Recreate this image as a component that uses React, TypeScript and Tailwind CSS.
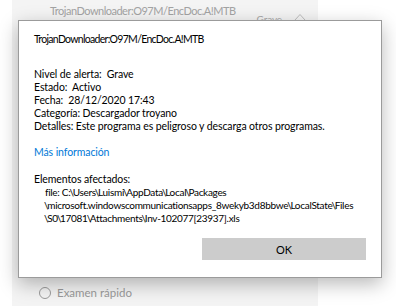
import React from "react";

function Path({ text }: { text: string }) {
  const parts = text.split("\\");
  return (
    <div>
      {parts.map((p, i) => (
        <React.Fragment key={i}>
          {i > 0 && <span className="inline-block mx-[-1px]">\</span>}
          {p}
        </React.Fragment>
      ))}
    </div>
  );
}

export default function App() {
  const font = { fontFamily: 'Lato, "Noto Sans", sans-serif' };
  return (
    <div
      className="relative w-[396px] h-[306px] overflow-hidden bg-white text-[10.5px] leading-[13px] tracking-[-0.1px] text-black"
      style={font}
    >
      {/* background page */}
      <div className="ml-[12px] w-[306px] h-full bg-[#f4f4f4] flex flex-col">
        <div className="flex items-start pl-[38px] pr-[12px] pt-[4px]">
          <span className="text-[#a3a3a3] text-[11px] leading-[14px] tracking-[-0.5px] whitespace-nowrap">
            TrojanDownloader:O97M/EncDoc.A!MTB
          </span>
          <div className="ml-auto mt-[9px] flex items-center text-[#a8a8a8] text-[10px] leading-[12px]">
            <span>Grave</span>
            <svg width="12" height="8" viewBox="0 0 12 8" className="ml-[12px] mt-[-4px]">
              <path d="M1 7 L6 1.5 L11 7" fill="none" stroke="#bdbdbd" strokeWidth="1" />
            </svg>
          </div>
        </div>
        <div className="flex-1" />
        <div className="flex items-center pl-[27px] pb-[7px] text-[#9a9a9a] text-[11.5px] tracking-normal">
          <span className="w-[12px] h-[12px] rounded-full border border-[#9a9a9a] mr-[6px]" />
          <span>Examen rápido</span>
        </div>
      </div>

      {/* dialog */}
      <div className="absolute left-[18px] top-[20px] w-[364px] h-[258px] bg-white border border-[#9b9b9b] shadow-[0_6px_18px_rgba(0,0,0,0.28)] flex flex-col pl-[15px] pr-[15px] pt-[12px]">
        <div className="tracking-[-0.7px]">TrojanDownloader:O97M/EncDoc.A!MTB</div>
        <div className="mt-[22px]">
          <div>Nivel de alerta:&nbsp; Grave</div>
          <div>Estado:&nbsp; Activo</div>
          <div>Fecha:&nbsp; 28/12/2020 17:43</div>
          <div>Categoría: Descargador troyano</div>
          <div className="whitespace-nowrap">Detalles: Este programa es peligroso y descarga otros programas.</div>
        </div>
        <div className="mt-[13px] text-[#0078d7]">Más información</div>
        <div className="mt-[14px]">Elementos afectados:</div>
        <div className="pl-[11px] whitespace-nowrap text-[10px] tracking-[-0.3px]">
          <Path text={"file: C:\\Users\\Luismi\\AppData\\Local\\Packages"} />
          <Path text={"\\microsoft.windowscommunicationsapps_8wekyb3d8bbwe\\LocalState\\Files"} />
          <Path text={"\\S0\\17081\\Attachments\\Inv-102077[23937].xls"} />
        </div>
        <div className="flex justify-end mt-[13px]">
          <button className="w-[164px] h-[22px] bg-[#cccccc] text-black text-[11px]">OK</button>
        </div>
      </div>
    </div>
  );
}
